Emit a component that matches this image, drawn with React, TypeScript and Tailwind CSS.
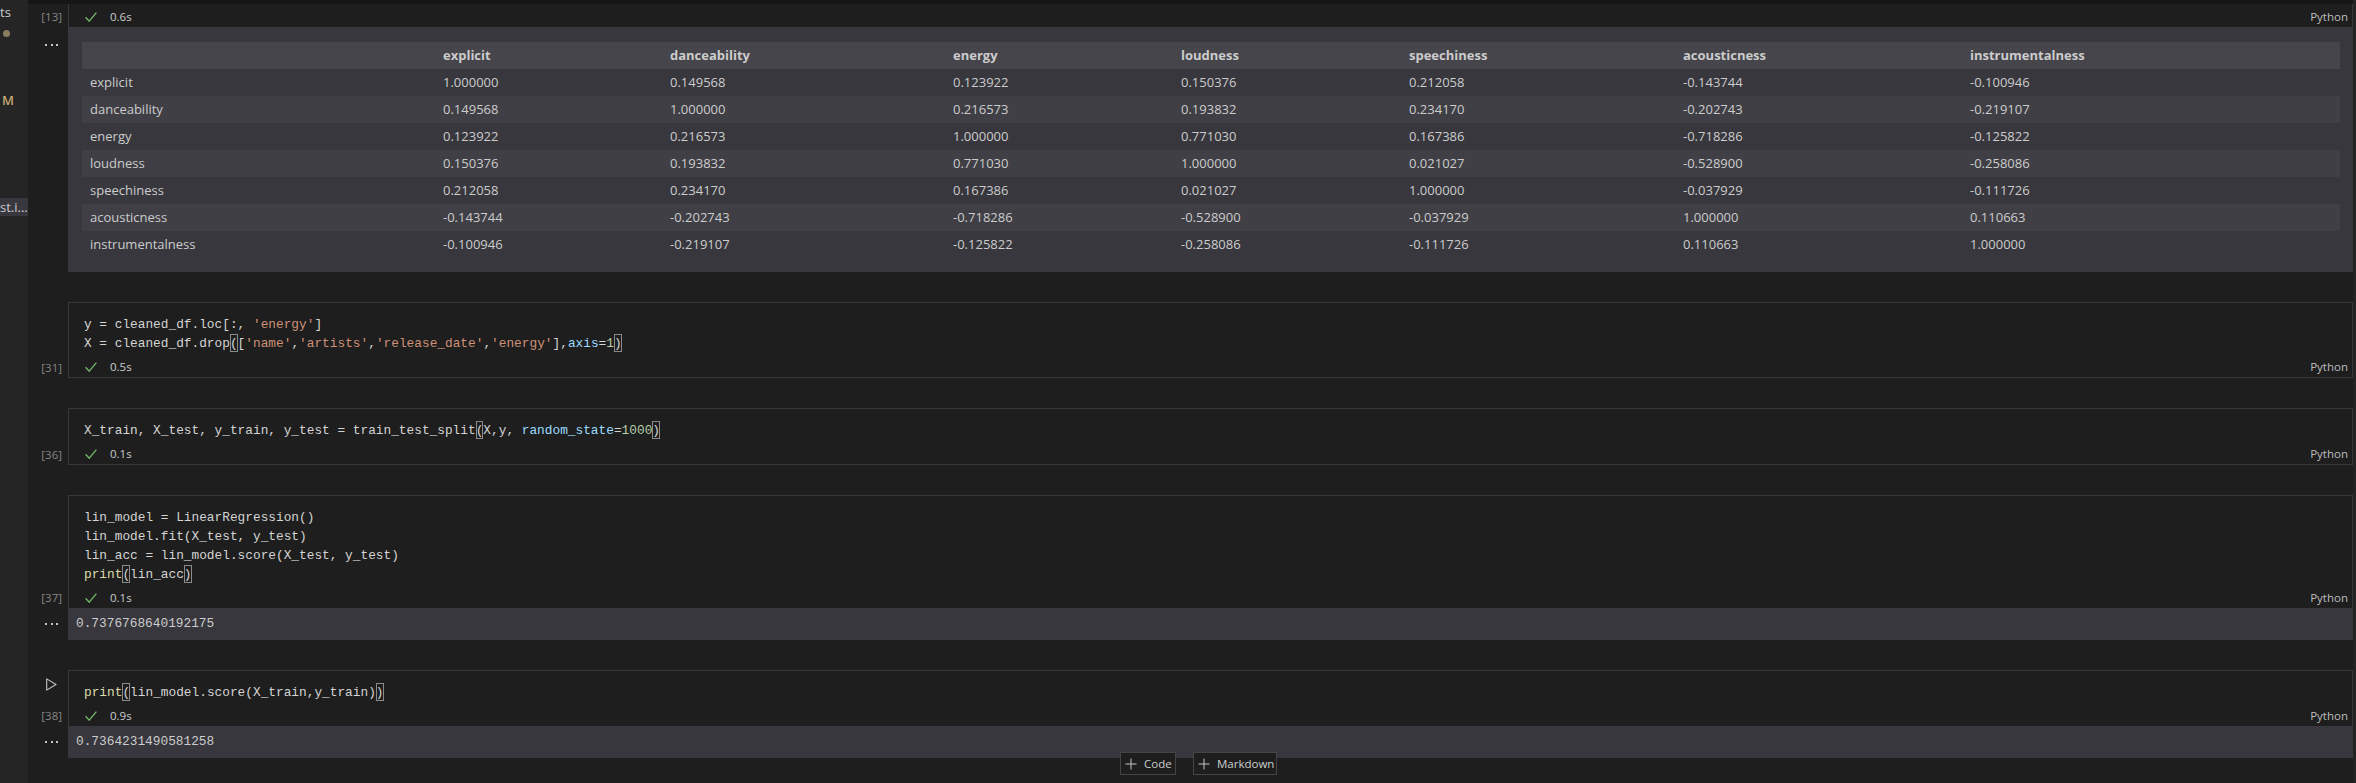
import type { ReactNode } from 'react'

const COLS = ['explicit', 'danceability', 'energy', 'loudness', 'speechiness', 'acousticness', 'instrumentalness']

const ROWS = [
  ['explicit', '1.000000', '0.149568', '0.123922', '0.150376', '0.212058', '-0.143744', '-0.100946'],
  ['danceability', '0.149568', '1.000000', '0.216573', '0.193832', '0.234170', '-0.202743', '-0.219107'],
  ['energy', '0.123922', '0.216573', '1.000000', '0.771030', '0.167386', '-0.718286', '-0.125822'],
  ['loudness', '0.150376', '0.193832', '0.771030', '1.000000', '0.021027', '-0.528900', '-0.258086'],
  ['speechiness', '0.212058', '0.234170', '0.167386', '0.021027', '1.000000', '-0.037929', '-0.111726'],
  ['acousticness', '-0.143744', '-0.202743', '-0.718286', '-0.528900', '-0.037929', '1.000000', '0.110663'],
  ['instrumentalness', '-0.100946', '-0.219107', '-0.125822', '-0.258086', '-0.111726', '0.110663', '1.000000'],
]

const GRID = 'grid grid-cols-[353px_227px_283px_228px_228px_274px_287px_1fr]'

// syntax bits
const Str = ({ children }: { children: ReactNode }) => <span className="text-[#ce9178]">{children}</span>
const Param = ({ children }: { children: ReactNode }) => <span className="text-[#9cdcfe]">{children}</span>
const Num = ({ children }: { children: ReactNode }) => <span className="text-[#b5cea8]">{children}</span>
const Fn = ({ children }: { children: ReactNode }) => <span className="text-[#dcdcaa]">{children}</span>
const Br = ({ children }: { children: ReactNode }) => (
  <span className="inline-block h-[18px] align-top shadow-[inset_0_0_0_1px_#8a8a8a]">{children}</span>
)

function Check() {
  return (
    <svg width="12" height="10" viewBox="0 0 12 10" fill="none">
      <path d="M0.6 5.2 L4.2 9.2 L11.4 0.6" stroke="#73b96b" strokeWidth="1.3" />
    </svg>
  )
}

function Dots() {
  return (
    <div className="flex gap-[3.5px]">
      <span className="h-[2px] w-[2px] bg-[#c5c5c5]" />
      <span className="h-[2px] w-[2px] bg-[#c5c5c5]" />
      <span className="h-[2px] w-[2px] bg-[#c5c5c5]" />
    </div>
  )
}

function RunIcon() {
  return (
    <svg width="11" height="13" viewBox="0 0 11 13" fill="none">
      <path d="M0.7 0.9 L10 6.5 L0.7 12.1 Z" stroke="#c5c5c5" strokeWidth="1.1" strokeLinejoin="round" />
    </svg>
  )
}

function Status({ time, tall }: { time: string; tall?: boolean }) {
  return (
    <div
      className={`flex items-center justify-between pl-[16px] pr-[4px] text-[11.5px] ${
        tall ? 'h-[23px] pt-[3px]' : 'h-[20px]'
      }`}
    >
      <div className="flex items-center gap-[13px]">
        <Check />
        <span className="text-[#cccccc]">{time}</span>
      </div>
      <span className="text-[#bdbdbd]">Python</span>
    </div>
  )
}

function Cell({
  label,
  lines,
  time,
  output,
  run,
}: {
  label: string
  lines: ReactNode[]
  time: string
  output?: string
  run?: boolean
}) {
  return (
    <div className="flex flex-col">
      <div className="flex">
        <div className="flex w-[40px] shrink-0 flex-col justify-between">
          <div className="pl-[18px] pt-[8px]">{run ? <RunIcon /> : null}</div>
          <div className="flex h-[20px] items-center justify-end pr-[6px] text-[11.5px] text-[#858585]">[{label}]</div>
        </div>
        <div className={`flex-1 border border-[#37373d] ${output ? 'border-b-0' : ''}`}>
          <div className="whitespace-pre pb-[4px] pl-[15px] pt-[12px] font-['Liberation_Mono',monospace] text-[12.8px] leading-[19px] text-[#d4d4d4]">
            {lines.map((l, i) => (
              <div key={i} className="h-[19px]">
                {l}
              </div>
            ))}
          </div>
          <Status time={time} />
        </div>
      </div>
      {output ? (
        <div className="flex">
          <div className="flex w-[40px] shrink-0 items-center pl-[17px]">
            <Dots />
          </div>
          <div className="flex h-[32px] flex-1 items-center bg-[#37373d] pl-[8px] font-['Liberation_Mono',monospace] text-[12.8px] text-[#cccccc]">
            {output}
          </div>
        </div>
      ) : null}
    </div>
  )
}

function Plus() {
  return (
    <svg width="12" height="12" viewBox="0 0 12 12" fill="none">
      <path d="M6 0.5 V11.5 M0.5 6 H11.5" stroke="#c5c5c5" strokeWidth="1" />
    </svg>
  )
}

export default function App() {
  return (
    <div className="relative flex h-[783px] w-[2356px] overflow-hidden bg-[#1e1e1e] font-['Open_Sans',sans-serif]">
      {/* explorer sliver */}
      <div className="flex w-[28px] shrink-0 flex-col overflow-hidden whitespace-nowrap bg-[#252526] text-[13px] text-[#cccccc]">
        <div className="mt-[4px] h-[16px] leading-[16px]">ts</div>
        <div className="ml-[3px] mt-[10px] h-[7px] w-[7px] rounded-full bg-[#8a7c60]" />
        <div className="mt-[55px] h-[16px] pl-[2px] font-semibold leading-[16px] text-[#c4a574]">M</div>
        <div className="mt-[90px] h-[18px] bg-[#37373d] leading-[18px]">st.i...</div>
      </div>

      <div className="flex flex-1 flex-col">
        <div className="h-[4px] bg-[#161616]" />

        {/* cell 13: correlation table output */}
        <div className="flex">
          <div className="flex h-[23px] w-[40px] shrink-0 items-center justify-end pr-[6px] pt-[3px] text-[11.5px] text-[#858585]">
            [13]
          </div>
          <div className="flex-1 border-x border-[#37373d]">
            <Status time="0.6s" tall />
          </div>
        </div>
        <div className="flex">
          <div className="w-[40px] shrink-0 pl-[17px] pt-[17px]">
            <Dots />
          </div>
          <div className="flex-1 bg-[#37373d] pb-[14px] pl-[14px] pr-[13px] pt-[15px] text-[13px] text-[#cccccc]">
            <div className={`${GRID} h-[27px] items-center bg-[#45454b] font-bold`}>
              <div />
              {COLS.map((c) => (
                <div key={c} className="pl-[8px]">
                  {c}
                </div>
              ))}
            </div>
            {ROWS.map((r, i) => (
              <div key={r[0]} className={`${GRID} h-[27px] items-center ${i % 2 === 1 ? 'bg-[#3f3f45]' : ''}`}>
                {r.map((v, j) => (
                  <div key={j} className="pl-[8px]">
                    {v}
                  </div>
                ))}
              </div>
            ))}
          </div>
        </div>

        <div className="mt-[30px]">
          <Cell
            label="31"
            time="0.5s"
            lines={[
              <>
                y = cleaned_df.loc[:, <Str>'energy'</Str>]
              </>,
              <>
                X = cleaned_df.drop<Br>(</Br>[<Str>'name'</Str>,<Str>'artists'</Str>,<Str>'release_date'</Str>,
                <Str>'energy'</Str>],<Param>axis</Param>=<Num>1</Num>
                <Br>)</Br>
              </>,
            ]}
          />
        </div>

        <div className="mt-[30px]">
          <Cell
            label="36"
            time="0.1s"
            lines={[
              <>
                X_train, X_test, y_train, y_test = train_test_split<Br>(</Br>X,y, <Param>random_state</Param>=
                <Num>1000</Num>
                <Br>)</Br>
              </>,
            ]}
          />
        </div>

        <div className="mt-[30px]">
          <Cell
            label="37"
            time="0.1s"
            output="0.7376768640192175"
            lines={[
              <>lin_model = LinearRegression()</>,
              <>lin_model.fit(X_test, y_test)</>,
              <>lin_acc = lin_model.score(X_test, y_test)</>,
              <>
                <Fn>print</Fn>
                <Br>(</Br>lin_acc<Br>)</Br>
              </>,
            ]}
          />
        </div>

        <div className="mt-[30px]">
          <Cell
            label="38"
            time="0.9s"
            run
            output="0.7364231490581258"
            lines={[
              <>
                <Fn>print</Fn>
                <Br>(</Br>lin_model.score(X_train,y_train)<Br>)</Br>
              </>,
            ]}
          />
        </div>
      </div>

      <div className="w-[3px] shrink-0 bg-[#232323]" />

      {/* add cell toolbar, floats over the last output */}
      <div className="absolute left-[1120px] top-[752px] flex gap-[17px] text-[11.5px] text-[#cccccc]">
        <div className="flex h-[23px] w-[56px] items-center gap-[7px] border border-[#454545] bg-[#1e1e1e] pl-[4px]">
          <Plus />
          <span>Code</span>
        </div>
        <div className="flex h-[23px] w-[84px] items-center gap-[7px] border border-[#454545] bg-[#1e1e1e] pl-[4px]">
          <Plus />
          <span>Markdown</span>
        </div>
      </div>
    </div>
  )
}
